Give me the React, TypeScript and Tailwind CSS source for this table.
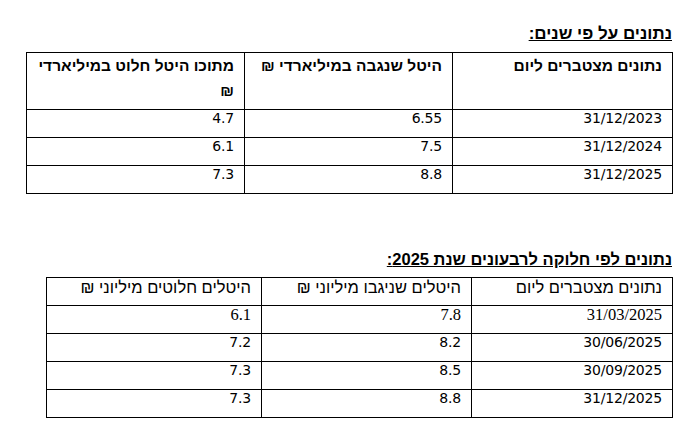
const yearly = [
  { date: '31/12/2023', raised: '6.55', final: '4.7' },
  { date: '31/12/2024', raised: '7.5', final: '6.1' },
  { date: '31/12/2025', raised: '8.8', final: '7.3' },
]

const quarterly = [
  { date: '31/03/2025', raised: '7.8', final: '6.1', serif: true },
  { date: '30/06/2025', raised: '8.2', final: '7.2' },
  { date: '30/09/2025', raised: '8.5', final: '7.3' },
  { date: '31/12/2025', raised: '8.8', final: '7.3' },
]

const heb = "font-['Liberation_Sans','DejaVu_Sans',sans-serif]"
const num = "font-['DejaVu_Sans',sans-serif] text-[14px] leading-[17px] tracking-[-0.2px]"
const serif = "font-['Liberation_Serif',serif] text-[16.5px] leading-[18px]"
const cell = 'align-top text-right border border-black pr-[10px] pt-0'

export default function App() {
  return (
    <div dir="rtl" className="w-[685px] h-[434px] bg-white text-black pt-[24px] pr-[12px]">
      {/* Yearly */}
      <h2 className={`${heb} text-[17px] font-bold underline leading-[20px] pr-[1px]`}>
        נתונים על פי שנים:
      </h2>
      <table className="mt-[8px] w-[646px] table-fixed border-collapse border-[1.5px] border-black">
        <colgroup>
          <col className="w-[220px]" />
          <col className="w-[208px]" />
          <col className="w-[218px]" />
        </colgroup>
        <thead>
          <tr className="h-[57px]">
            <th className={`${heb} ${cell} font-bold text-[15.5px] leading-[25px]`}>
              נתונים מצטברים ליום
            </th>
            <th className={`${heb} ${cell} font-bold text-[15.5px] leading-[25px]`}>
              היטל שנגבה במיליארדי ₪
            </th>
            <th className={`${heb} ${cell} font-bold text-[15.5px] leading-[25px] pl-[10px]`}>
              מתוכו היטל חלוט במיליארדי ₪
            </th>
          </tr>
        </thead>
        <tbody>
          {yearly.map((r) => (
            <tr key={r.date} className="h-[28px]">
              <td className={`${num} ${cell}`}>{r.date}</td>
              <td className={`${num} ${cell}`}>{r.raised}</td>
              <td className={`${num} ${cell}`}>{r.final}</td>
            </tr>
          ))}
        </tbody>
      </table>

      {/* Quarterly */}
      <h2 className={`${heb} mt-[55px] text-[16.5px] font-bold underline leading-[20px] pr-[1px]`}>
        נתונים לפי חלוקה לרבעונים שנת 2025:
      </h2>
      <table className="mt-[8px] w-[626px] table-fixed border-collapse border-[1.5px] border-black">
        <colgroup>
          <col className="w-[201px]" />
          <col className="w-[210px]" />
          <col className="w-[215px]" />
        </colgroup>
        <thead>
          <tr className="h-[28px]">
            <th className={`${heb} ${cell} font-normal text-[16.5px] leading-[19px]`}>
              נתונים מצטברים ליום
            </th>
            <th className={`${heb} ${cell} font-normal text-[16.5px] leading-[19px]`}>
              היטלים שניגבו מיליוני ₪
            </th>
            <th className={`${heb} ${cell} font-normal text-[16.5px] leading-[19px]`}>
              היטלים חלוטים מיליוני ₪
            </th>
          </tr>
        </thead>
        <tbody>
          {quarterly.map((r) => {
            const f = r.serif ? serif : num
            return (
              <tr key={r.date} className="h-[28px]">
                <td className={`${f} ${cell}`}>{r.date}</td>
                <td className={`${f} ${cell}`}>{r.raised}</td>
                <td className={`${f} ${cell}`}>{r.final}</td>
              </tr>
            )
          })}
        </tbody>
      </table>
    </div>
  )
}
